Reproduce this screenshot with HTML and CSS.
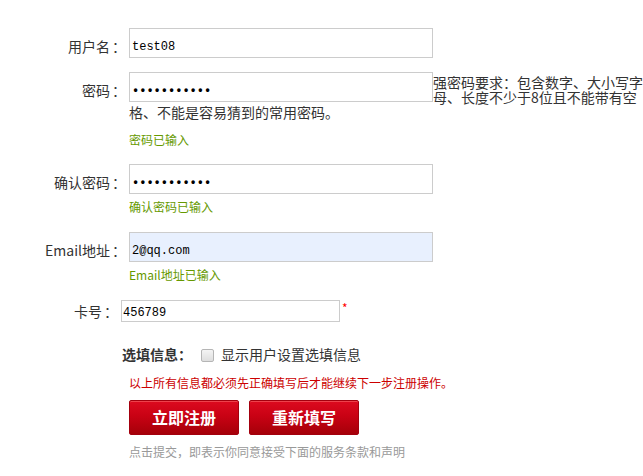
FILE: index.html
```html
<!DOCTYPE html>
<html lang="zh-CN">
<head>
<meta charset="utf-8">
<title>注册</title>
<link rel="stylesheet" href="styles.css">
</head>
<body>
<form class="reg">
  <div class="row row-user">
    <label class="lbl">用户名</label>
    <div class="field"><input class="txt" type="text" value="test08"></div>
  </div>

  <div class="row row-pwd">
    <label class="lbl">密码</label>
    <div class="field field-pwd">
      <input class="txt txt-float" type="password" value="abcdefghijk">
      <span class="hint">强密码要求：包含数字、大小写字母、长度不少于8位且不能带有空格、不能是容易猜到的常用密码。</span>
      <p class="ok ok-pwd">密码已输入</p>
    </div>
  </div>

  <div class="row row-confirm">
    <label class="lbl">确认密码</label>
    <div class="field">
      <input class="txt" type="password" value="abcdefghijk">
      <p class="ok">确认密码已输入</p>
    </div>
  </div>

  <div class="row row-email">
    <label class="lbl">Email地址</label>
    <div class="field">
      <input class="txt txt-filled" type="text" value="2@qq.com">
      <p class="ok">Email地址已输入</p>
    </div>
  </div>

  <div class="row row-card">
    <label class="lbl lbl-card">卡号</label>
    <div class="field field-card">
      <input class="txt txt-card" type="text" value="456789">
      <span class="req">*</span>
    </div>
  </div>

  <div class="opt">
    <span class="opt-title">选填信息：</span>
    <input class="chk" type="checkbox" id="showopt">
    <label class="opt-label" for="showopt">显示用户设置选填信息</label>
  </div>

  <p class="warn">以上所有信息都必须先正确填写后才能继续下一步注册操作。</p>

  <div class="actions">
    <button class="btn" type="submit">立即注册</button>
    <button class="btn" type="reset">重新填写</button>
  </div>

  <p class="terms">点击提交，即表示你同意接受下面的服务条款和声明</p>
</form>
</body>
</html>
```

FILE: styles.css
```css
* {
  box-sizing: border-box;
}

html, body {
  overflow: hidden;
}

body {
  margin: 0;
  background: #fff;
  color: #333;
  font-family: "Noto Sans CJK SC", "Liberation Sans", sans-serif;
  font-size: 14px;
}

.reg {
  padding-top: 28px;
  margin: 0;
}

.row {
  display: flex;
  align-items: flex-start;
}

.row-user { margin-bottom: 14px; }
.row-pwd { margin-bottom: 16px; }
.row-confirm { margin-bottom: 17px; }
.row-email { margin-bottom: 17px; }

.lbl {
  flex: none;
  width: 122px;
  height: 30px;
  text-align: right;
  line-height: 30px;
  padding-top: 3px;
  color: #333;
  white-space: nowrap;
}

.lbl::after {
  content: "：";
  display: inline-block;
  width: 10px;
  padding-left: 2px;
  text-align: left;
  vertical-align: top;
}

.lbl-card {
  width: 114px;
  height: 22px;
  line-height: 22px;
  padding-top: 0;
}

.field {
  flex: none;
  width: 514px;
  margin-left: 7px;
}

.field-pwd {
  width: 518px;
  padding-top: 3px;
  line-height: 15px;
}

.txt {
  display: block;
  width: 304px;
  height: 30px;
  margin: 0;
  padding: 8px 2px 0;
  border: 1px solid #ccc;
  border-radius: 0;
  background: #fff;
  color: #000;
  font-family: "Liberation Mono", "DejaVu Sans Mono", monospace;
  font-size: 12px;
  font-weight: bold;
  outline: none;
}

.txt[type="text"] {
  font-weight: normal;
}

.txt-float {
  float: left;
  margin-top: -3px;
}

.txt-filled {
  background: #e8f0fe;
}

.hint {
  color: #333;
}

.ok {
  clear: both;
  margin: 5px 0 0;
  color: #669900;
  font-size: 12px;
  line-height: 16px;
}

.ok-pwd {
  margin-top: 12px;
}

.field-card {
  display: flex;
  align-items: flex-start;
}

.txt-card {
  width: 219px;
  height: 22px;
  padding: 4px 1px 0;
}

.req {
  margin-left: 2px;
  color: #f00;
  font-size: 12px;
  line-height: 16px;
}

.opt {
  display: flex;
  align-items: center;
  margin-top: 22px;
  padding-left: 122px;
  line-height: 20px;
}

.opt-title {
  font-weight: bold;
  color: #333;
}

.chk {
  appearance: none;
  -webkit-appearance: none;
  width: 13px;
  height: 13px;
  margin: 2px 0 0 9px;
  border: 1px solid #b5b5b5;
  border-radius: 2px;
  background: linear-gradient(#f4f4f4, #dedede);
}

.opt-label {
  margin-left: 7px;
  color: #333;
}

.warn {
  margin: 11px 0 0;
  padding-left: 129px;
  color: #cc0000;
  font-size: 12px;
  line-height: 16px;
}

.actions {
  display: flex;
  gap: 10px;
  margin-top: 9px;
  padding-left: 129px;
}

.btn {
  width: 110px;
  height: 35px;
  margin: 0;
  padding: 0;
  border: 1px solid #a3000e;
  border-radius: 2px;
  background: linear-gradient(#dc0a1f 0%, #c90214 45%, #a50009 100%);
  box-shadow: inset 0 1px 0 rgba(255, 120, 120, 0.5);
  color: #fff;
  font-family: "Noto Sans CJK SC", sans-serif;
  font-size: 16px;
  font-weight: bold;
  line-height: 33px;
  cursor: pointer;
}

.terms {
  margin: 9px 0 0;
  padding-left: 129px;
  color: #999;
  font-size: 12px;
  line-height: 16px;
}
```
